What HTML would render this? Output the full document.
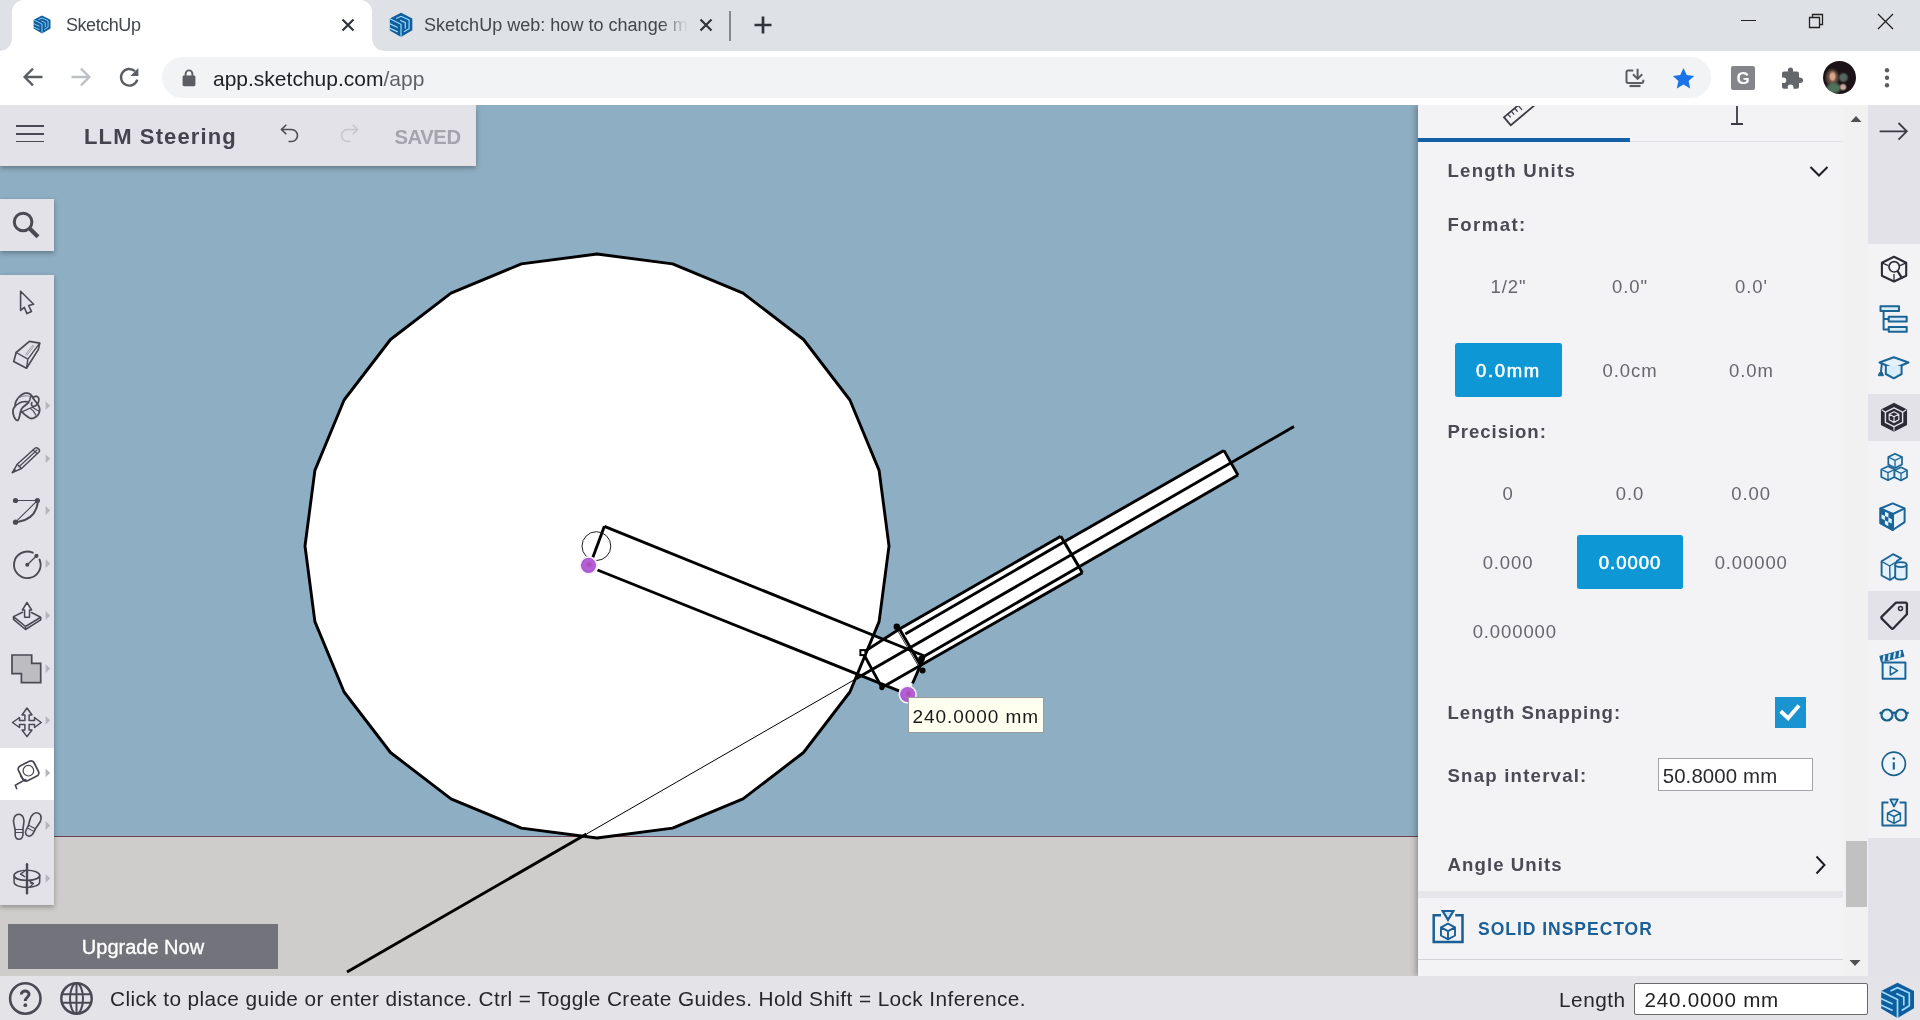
<!DOCTYPE html>
<html>
<head>
<meta charset="utf-8">
<title>SketchUp</title>
<style>
*{box-sizing:border-box;margin:0;padding:0}
html,body{width:1920px;height:1020px;overflow:hidden;background:#fff;font-family:"Liberation Sans",sans-serif;}
.abs{position:absolute}
#root{position:relative;width:1920px;height:1020px;overflow:hidden;will-change:transform}
/* ---------- browser chrome ---------- */
#tabstrip{left:0;top:0;width:1920px;height:51px;background:#dee1e6}
#tab1{left:12px;top:0;width:360px;height:51px;background:#fff;border-radius:12px 12px 0 0}
#tab1:before,#tab1:after{content:"";position:absolute;bottom:0;width:12px;height:12px;background:radial-gradient(circle at 0 0,transparent 11.5px,#fff 12px)}
#tab1:before{left:-12px}
#tab1:after{right:-12px;background:radial-gradient(circle at 100% 0,transparent 11.5px,#fff 12px)}
.tabtitle{font-size:18px;color:#43474b;white-space:nowrap;line-height:22px}
#toolbar{left:0;top:51px;width:1920px;height:54px;background:#fff}
#omni{left:161.5px;top:57px;width:1549px;height:41.4px;border-radius:20.7px;background:#f1f3f4}
#url{left:213px;top:66.5px;font-size:21px;line-height:24px;color:#202124;white-space:nowrap}
#url span{color:#5f6368}
/* ---------- app ---------- */
#app{left:0;top:105px;width:1920px;height:915px;background:#8eaec3;overflow:hidden}
#appin{left:0;top:1px;width:1920px;height:914px}
#ground{left:0;top:731px;width:1418px;height:140px;background:#cecdcb}
#horizon{left:0;top:730px;width:1418px;height:1.2px;background:#6e4050}
#canvas{left:0;top:0}
#hdr{left:0;top:0;width:476px;height:60px;background:#e3e2e8;box-shadow:0 -1px 0 #e3e2e8,0 2px 5px rgba(0,0,0,.32)}
#title{left:84px;top:17px;font-size:22px;font-weight:bold;color:#45444e;letter-spacing:1.13px;line-height:28px;white-space:nowrap}
#saved{left:394.5px;top:17px;font-size:20.3px;font-weight:bold;color:#a5a4ad;line-height:28px;letter-spacing:-.45px}
#search{left:0;top:93px;width:54px;height:52px;background:#e3e2e8;box-shadow:0 2px 5px rgba(0,0,0,.32)}
#tools{left:0;top:169px;width:54px;height:630px;background:#e3e2e8;box-shadow:0 2px 5px rgba(0,0,0,.32)}
#toolact{left:0;top:642px;width:54px;height:52px;background:#fff}
#upgrade{left:8px;top:818px;width:270px;height:44.6px;background:#73737b;color:#fff;font-size:20px;line-height:46.600px;text-align:center;-webkit-text-stroke:.35px #fff}
#status{left:0;top:870px;width:1920px;height:44px;background:#e3e3e8}
#statustxt{left:110px;top:10px;font-size:20.8px;line-height:26px;color:#27262c;white-space:nowrap;letter-spacing:.4px}
#lenlbl{left:1559px;top:11px;font-size:20.8px;line-height:26px;color:#27262c;letter-spacing:.5px}
#leninp{left:1634px;top:6.5px;width:234px;height:32.5px;background:#fff;border:1.5px solid #6a6a6a;border-radius:2px;font-size:20.6px;letter-spacing:.78px;line-height:32px;padding-left:9.5px;color:#222;white-space:nowrap}
/* ---------- right panel ---------- */
#panel{left:1418px;top:0;width:450px;height:870px;background:#f3f3f6;box-shadow:0 -1px 0 #f3f3f6,-2px 0 6px rgba(0,0,0,.3)}
#strip{left:1868px;top:0;width:52px;height:870px;background:#f3f3f6;box-shadow:0 -1px 0 #e3e2e8}
.hl{background:#e3e2e8;left:0;width:52px}
.pt{font-weight:bold;color:#4b4a54;font-size:18.6px;line-height:24px;white-space:nowrap}
.opt{font-size:18.5px;color:#67666f;line-height:24px;text-align:center;width:120px;white-space:nowrap}
.opt.w{color:#fff;-webkit-text-stroke:.55px #fff}
</style>
</head>
<body>
<div id="root">
<!-- CHROME -->
<div id="tabstrip" class="abs"></div>
<div id="tab1" class="abs"></div>
<div id="toolbar" class="abs"></div>
<div id="omni" class="abs"></div>
<!-- tab 1 -->
<svg class="abs" style="left:33px;top:15px" width="18" height="19" viewBox="10 10.500 35 37"><path d="M27.500 11.300 44 19.600V36.800L27.500 46.600 11.200 37V19.600z" fill="#0e5d9c"/><path d="M11.300 19.900 27.500 28V46.500M20.400 19.600 27.600 16.300 39.300 21.600V34.300L31.700 38.900M26.300 22l7.500 3.500V34M10.800 27l11.900 5.600M10.800 33.600l11.900 5.400" fill="none" stroke="#9bdcff" stroke-width="1.700"/></svg>
<div class="abs tabtitle" style="left:66px;top:14px;letter-spacing:-.45px">SketchUp</div>
<svg class="abs" style="left:341px;top:18px" width="14" height="14" viewBox="0 0 14 14"><path d="M1.5 1.5l11 11M12.5 1.5l-11 11" stroke="#30343a" stroke-width="2.2"/></svg>
<!-- tab 2 -->
<svg class="abs" style="left:389px;top:12px" width="24" height="26" viewBox="10 10.500 35 37"><path d="M27.500 11.300 44 19.600V36.800L27.500 46.600 11.200 37V19.600z" fill="#0e5d9c"/><path d="M11.300 19.900 27.500 28V46.500M20.400 19.600 27.600 16.300 39.300 21.600V34.300L31.700 38.900M26.300 22l7.500 3.500V34M10.800 27l11.900 5.600M10.800 33.600l11.900 5.400" fill="none" stroke="#9bdcff" stroke-width="1.700"/></svg>
<div class="abs tabtitle" id="t2" style="left:424px;top:14px;width:266px;overflow:hidden;letter-spacing:0.02px;-webkit-mask-image:linear-gradient(90deg,#000 236px,transparent 264px)">SketchUp web: how to change measure</div>
<svg class="abs" style="left:699px;top:18px" width="14" height="14" viewBox="0 0 14 14"><path d="M1.5 1.5l11 11M12.5 1.5l-11 11" stroke="#30343a" stroke-width="2.2"/></svg>
<div class="abs" style="left:729px;top:11px;width:1.6px;height:30px;background:#85888d"></div>
<svg class="abs" style="left:753px;top:15px" width="20" height="20" viewBox="0 0 20 20"><path d="M10 1.5v17M1.5 10h17" stroke="#30343a" stroke-width="2.7"/></svg>
<!-- window controls -->
<div class="abs" style="left:1741px;top:20px;width:15px;height:1.2px;background:#222"></div>
<svg class="abs" style="left:1808px;top:13px" width="17" height="17" viewBox="0 0 17 17"><path d="M1.5 4.5h10v10h-10zM4.5 4.5v-3h10v10h-3" fill="none" stroke="#222" stroke-width="1.3"/></svg>
<svg class="abs" style="left:1877px;top:13px" width="17" height="17" viewBox="0 0 17 17"><path d="M1 1l15 15M16 1L1 16" stroke="#222" stroke-width="1.3"/></svg>
<!-- nav -->
<svg class="abs" style="left:22px;top:66px" width="22" height="22" viewBox="0 0 22 22"><path d="M20.5 11H3M11 2.6 2.6 11l8.4 8.4" fill="none" stroke="#5a5e63" stroke-width="2.3"/></svg>
<svg class="abs" style="left:70px;top:66px" width="22" height="22" viewBox="0 0 22 22"><path d="M1.5 11H19M11 2.6l8.4 8.4-8.4 8.4" fill="none" stroke="#bcc0c5" stroke-width="2.3"/></svg>
<svg class="abs" style="left:118px;top:66px" width="23" height="23" viewBox="0 0 23 23"><path d="M19.3 13.6A8.3 8.3 0 1 1 17 5.2" fill="none" stroke="#5a5e63" stroke-width="2.4"/><path d="M20.4 2v8h-8z" fill="#5a5e63"/></svg>
<svg class="abs" style="left:182px;top:69px" width="14" height="18" viewBox="0 0 14 18"><path d="M3.6 7V4.8a3.4 3.4 0 0 1 6.8 0V7" fill="none" stroke="#5a5e63" stroke-width="1.9"/><rect x="0.6" y="6.6" width="12.8" height="10.6" rx="1.4" fill="#5a5e63"/></svg>
<div class="abs" id="url">app.sketchup.com<span>/app</span></div>
<!-- right icons -->
<svg class="abs" style="left:1623px;top:66px" width="24" height="24" viewBox="1623 66 24 24" fill="none" stroke="#5a5e63" stroke-width="2"><path d="M1633.300 70.500H1628.200Q1626.500 70.500 1626.500 72.200V81.300Q1626.500 83 1628.200 83H1641.600Q1643.300 83 1643.300 81.300V79.800"/><path d="M1629.500 86H1640.500" stroke-width="2.200"/><path d="M1637.600 68.800V78.300M1633 74.300 1637.600 78.900 1642.200 74.300" stroke-width="2"/></svg>
<svg class="abs" style="left:1671.500px;top:66.500px" width="23" height="22" viewBox="0 0 25 24"><path d="M12.5 1.2l3.5 7.6 8.1.9-6 5.6 1.7 8.1-7.3-4.2-7.3 4.2 1.7-8.1-6-5.6 8.1-.9z" fill="#1a73e8"/></svg>
<div class="abs" style="left:1731px;top:66px;width:24px;height:24px;background:#838588;border-radius:2px;color:#fff;font-size:17px;font-weight:bold;line-height:25px;text-align:center">G</div>
<svg class="abs" style="left:1779px;top:66px" width="24" height="24" viewBox="0 0 24 24"><path d="M21.5 11.5H20V7.6c0-1.1-.9-2-2-2h-3.9V4.1a2.6 2.6 0 0 0-5.2 0v1.5H5c-1.1 0-2 .9-2 2v3.8h1.5a2.8 2.8 0 0 1 0 5.6H3v3.8c0 1.1.9 2 2 2h3.8v-1.5a2.8 2.8 0 0 1 5.6 0v1.5H18c1.100 0 2-.9 2-2v-3.900h1.500a2.600 2.600 0 0 0 0-5.200z" fill="#63666b"/></svg>
<div class="abs" style="left:1823px;top:61px;width:33px;height:33px;border-radius:50%;background:radial-gradient(ellipse 3.5px 5px at 29% 47%,#d9a58c 0 60%,rgba(160,110,90,.6) 100%,transparent 130%),radial-gradient(ellipse 4px 4px at 61% 79%,#caa79c 0 50%,transparent 100%),radial-gradient(ellipse 5px 5px at 62% 50%,#56655f 0 60%,transparent 110%),radial-gradient(ellipse 8px 6px at 33% 82%,#4f7058 0 60%,transparent 110%),radial-gradient(ellipse 7px 9px at 28% 50%,#5a4a3c 0 70%,transparent 110%),#1b1317;"></div>
<svg class="abs" style="left:1883px;top:66px" width="8" height="24" viewBox="0 0 8 24"><circle cx="4" cy="4.200" r="2.200" fill="#5a5e63"/><circle cx="4" cy="11.700" r="2.200" fill="#5a5e63"/><circle cx="4" cy="19.200" r="2.200" fill="#5a5e63"/></svg>

<!-- APP -->
<div id="app" class="abs"><div id="appin" class="abs">
<div id="ground" class="abs"></div>
<div id="horizon" class="abs"></div>
<svg id="canvas" class="abs" width="1418" height="869" viewBox="0 0 1418 869" style="left:0;top:0">
<g fill="#fff" stroke="#000" stroke-width="2.9" stroke-linejoin="round" stroke-linecap="butt">
<polygon points="889.0,440.0 879.1,364.4 849.9,294.0 803.5,233.5 743.0,187.1 672.6,157.9 597.0,148.0 521.4,157.9 451.0,187.1 390.5,233.5 344.1,294.0 314.9,364.4 305.0,440.0 314.9,515.6 344.1,586.0 390.5,646.5 451.0,692.9 521.4,722.1 597.0,732.0 672.6,722.1 743.0,692.9 803.5,646.5 849.9,586.0 879.1,515.6" stroke="none"/>
<polygon points="589.5,460.5 604.4,420.3 924.5,550.0 908.0,588.0" stroke="none"/>
<polygon points="862.9,546.6 899.5,523.0 1060.8,430.3 1082.4,466.7 881.9,581.6" stroke="none"/>
<polygon points="1065.5,435.0 1223.9,344.4 1238.0,369.1 1080.4,460.1" stroke="none"/>
<polygon points="889.0,440.0 879.1,364.4 849.9,294.0 803.5,233.5 743.0,187.1 672.6,157.9 597.0,148.0 521.4,157.9 451.0,187.1 390.5,233.5 344.1,294.0 314.9,364.4 305.0,440.0 314.9,515.6 344.1,586.0 390.5,646.5 451.0,692.9 521.4,722.1 597.0,732.0 672.6,722.1 743.0,692.9 803.5,646.5 849.9,586.0 879.1,515.6" fill="none"/>
<line x1="592.8" y1="451.5" x2="604.4" y2="420.3"/>
<line x1="604.4" y1="420.3" x2="924.5" y2="550.0"/>
<line x1="597.5" y1="464.0" x2="899.0" y2="584.8"/>
<line x1="924.5" y1="550.0" x2="912.5" y2="577.5"/>
<line x1="899.5" y1="523.0" x2="1060.8" y2="430.3"/>
<line x1="1060.8" y1="430.3" x2="1082.4" y2="466.7"/>
<line x1="1082.4" y1="466.7" x2="881.9" y2="581.6"/>
<line x1="899.5" y1="523.0" x2="920.7" y2="559.5"/>
<line x1="862.9" y1="546.6" x2="899.5" y2="523.0"/>
<line x1="862.9" y1="546.6" x2="881.9" y2="581.6"/>
<line x1="905.3" y1="528.1" x2="1065.5" y2="435.0"/>
<line x1="924.7" y1="549.9" x2="1080.4" y2="460.1"/>
<line x1="1065.5" y1="435.0" x2="1223.9" y2="344.4"/>
<line x1="1223.9" y1="344.4" x2="1238.0" y2="369.1"/>
<line x1="1238.0" y1="369.1" x2="1080.4" y2="460.1"/>
<line x1="856.0" y1="572.8" x2="1294.0" y2="320.5"/>
<line x1="347.0" y1="866.0" x2="586.5" y2="728.0"/>
<line x1="586.5" y1="728.0" x2="856.0" y2="572.8" stroke-width="1"/>
<line x1="897.2" y1="523.8" x2="918.6" y2="560.3" stroke-width="0.8"/>
</g>
<g fill="#000">
<circle cx="896.8" cy="520.8" r="3.2"/>
<circle cx="921.4" cy="553.0" r="3.2"/>
<circle cx="922.6" cy="564.4" r="3.0"/>
<circle cx="881.9" cy="581.6" r="2.6"/>
</g>
<rect x="860.4" y="544.1" width="5" height="5" fill="#fff" stroke="#000" stroke-width="2"/>
<circle cx="596.4" cy="440.1" r="14.4" fill="none" stroke="#222" stroke-width="1"/>
<defs><radialGradient id="pg" cx="55%" cy="45%" r="60%"><stop offset="0" stop-color="#a846b4"/><stop offset=".45" stop-color="#b560d8"/><stop offset="1" stop-color="#a858cc"/></radialGradient></defs>
<circle cx="588.5" cy="459.29999999999995" r="9.2" fill="#f7effc"/>
<circle cx="588.5" cy="459.29999999999995" r="7.6" fill="url(#pg)"/>
<circle cx="907.7" cy="588.5" r="9.2" fill="#f7effc"/>
<circle cx="907.7" cy="588.5" r="7.6" fill="url(#pg)"/>
</svg>
<div class="abs" style="left:908px;top:591px;width:136px;height:36px;background:#fffff0;border:1px solid #9a9a9a;font-size:19px;line-height:37px;padding-left:3.5px;letter-spacing:.93px;color:#1a1a1a;white-space:nowrap">240.0000 mm</div>
<div id="hdr" class="abs"><div class="abs" style="left:16px;top:19px;width:28px;height:1.7px;background:#4b4a54"></div>
<div class="abs" style="left:16px;top:27px;width:28px;height:1.7px;background:#4b4a54"></div>
<div class="abs" style="left:16px;top:34.500px;width:28px;height:1.700px;background:#4b4a54"></div>
<div class="abs" id="title">LLM Steering</div>
<svg class="abs" style="left:279px;top:17px" width="22" height="22" viewBox="0 0 22 22"><path d="M2.500 6.500H12.500A6 6 0 0 1 12.500 18.500H9.500" fill="none" stroke="#4b4a54" stroke-width="1.600"/><path d="M7.300 1.800 2.500 6.500 7.300 11.200" fill="none" stroke="#4b4a54" stroke-width="1.600"/></svg>
<svg class="abs" style="left:338px;top:17px" width="22" height="22" viewBox="0 0 22 22"><path d="M19.500 6.500H9.500A6 6 0 0 0 9.500 18.500H12.500" fill="none" stroke="#c6c5cd" stroke-width="1.600"/><path d="M14.700 1.800 19.500 6.500 14.700 11.200" fill="none" stroke="#c6c5cd" stroke-width="1.600"/></svg>
<div class="abs" id="saved">SAVED</div>
</div>
<div id="search" class="abs"><svg class="abs" style="left:10px;top:10px" width="32" height="32" viewBox="0 0 32 32"><circle cx="13.100" cy="13" r="8.800" fill="none" stroke="#4b4a54" stroke-width="3"/><path d="M19.600 19.600 28 27.700" stroke="#4b4a54" stroke-width="4.200" stroke-linecap="butt"/></svg>
</div>
<div id="tools" class="abs"><div id="toolact" class="abs" style="top:473px"></div><svg class="abs" style="left:0;top:0" width="54" height="630" viewBox="0 275 54 630" fill="none" stroke="#4b4a54" stroke-width="1.7" stroke-linejoin="round" stroke-linecap="round">
<!-- select -->
<path d="M20.600 291.300V310.400L24.300 307.300 26.900 313.600 31.500 311.600 28.700 305.500 33.600 304.200Z" stroke-width="1.600"/>
<!-- eraser -->
<path d="M29.400 341.300 39.700 343.200 38.300 349.600 26.500 368.200 13.700 361.400 16.200 352.500Z"/>
<path d="M16.200 352.500 27.900 359.200 39.700 343.200M27.900 359.200 26.500 368.200" stroke-width="1.400"/>
<path d="M25.600 354.500 32.800 345.300M27 355.300 34 346" stroke-width=".8" stroke="#8a8992"/>
<!-- paint bucket -->
<path d="M31.5 395.4 29.8 393.8 27.6 393.1 25 393.2 22.5 394.2 20 396 17.8 398.5 16.3 400.8 15.4 402.9 15 406.4 13.6 408.3 13 410.5 13.1 413.5 13.9 416.3 15 418.5 16.2 420 17.4 420.5 18.4 419.8 18.9 418.5 19.6 416 20.1 413.5 20.8 411 21.7 408.7 22.9 407.2 24.4 406 26.5 404.3 28.7 402.5" stroke-width="1.800"/>
<path d="M15.8 405.6 17.2 404.3 18.9 403.3 21 402.3 23.3 401.7 25.7 401.6 28 401.7 29.5 400.9 30 399.5 30.3 397.8 30.8 396.5 31.5 395.4" stroke-width="1.500"/>
<path d="M17.8 398.9 19.6 397.6 21.7 396.6 24 396 26.4 395.8 28.3 396 29.9 396.6" stroke-width=".900" stroke="#77767f"/>
<path d="M21.7 411.9 24.8 414.6 28 417 29.6 418 31.1 418.5 33.1 418.3 35 417.4 37 416 38.5 414.2 39.4 412 39.7 409.5 39.3 407.4 38.5 405.6 37 403.3 35.2 401 33.5 398.9 31.9 396.2" stroke-width="1.800"/>
<path d="M21.7 411.9 26.4 409.9 30.3 408 33.5 407.2M30.3 408.4 33.5 411.1 35.8 415M33.5 408 38.5 411.1" stroke-width="1.200"/>
<path d="M33.5 397.4 34.6 396.5 35.8 396.2 37.1 396.5 38.2 397.4 38.8 398.7 38.9 400.1 38.5 401.8 37.8 403.3 36.9 404.6 35.8 405.6 34.7 406.2 33.5 406.4 32.3 406 31.5 405.2 31.5 403.8 31.9 402.5" stroke-width="1.700"/>
<!-- pencil -->
<path d="M12.300 472.600 17.200 464.300 35 448.200C36.800 446.600 40.600 449.700 39.200 451.700L21.500 468.500Z" stroke-width="1.500"/>
<path d="M19 466.800 37 450M17.200 464.300 21.500 468.500M33 450 37.300 453.700" stroke-width="1.200"/>
<path d="M12.300 472.600 14.500 468.800 16 470.500Z" fill="#4b4a54" stroke-width=".8"/>
<!-- arc -->
<path d="M15.500 500.500H37.400M15.500 522.200 37.400 500.500" stroke-width="1.100"/>
<path d="M18.500 521.800Q35 519 37.600 503.500" stroke-width="2"/>
<g fill="#4b4a54" stroke="none"><circle cx="15.500" cy="500.500" r="2.600"/><circle cx="37.400" cy="500.500" r="2.600"/><circle cx="15.500" cy="522.200" r="2.600"/></g>
<!-- circle -->
<path d="M39.500 559.500A13.300 13.300 0 1 1 32.800 552.700" stroke-width="1.900"/>
<path d="M27.300 564.700 36.300 556" stroke-width="1.300"/>
<g fill="#4b4a54" stroke="none"><circle cx="27.300" cy="564.700" r="2"/><circle cx="36.400" cy="555.900" r="2.100"/></g>
<!-- push pull -->
<path d="M22.500 612.300 13.500 616.600 25.500 626.500 40.700 617.200 31.500 612.500M13.500 616.600V619.300L25.500 629.500 40.700 619.800V617.200M25.500 626.500V629.500" stroke-width="1.600"/>
<path d="M27 602.500 22.400 610H24.600V617.200H29.500V610H31.600Z" fill="#ebeaef" stroke-width="1.500"/>
<!-- shells -->
<path d="M12 655H31.700V663.300H40.700V682.700H21.400V673.700H12Z" fill="#bdbcc1" stroke-width="1.700" stroke-linejoin="miter"/>
<!-- move -->
<path d="M27 708 22 715H24.900V720.400H19.500V717.500L12.500 722.500 19.500 727.500V724.600H24.900V730H22L27 736.600 32 730H29.100V724.600H34.500V727.500L41.200 722.500 34.500 717.500V720.400H29.100V715H32Z" stroke-width="1.500"/>
<!-- tape -->
<g transform="rotate(-27 28.500 771)"><rect x="19.800" y="762.700" width="17.400" height="16.600" rx="3.500" stroke-width="1.800"/></g>
<circle cx="28.400" cy="770.700" r="5.300" stroke-width="1.200"/>
<path d="M25.500 779.500 15.300 785.200 16.700 788.600" stroke-width="1.600"/>
<path d="M20.500 775.500C21.500 778 23.500 779.800 26.500 780.500" stroke-width="1.500"/>
<!-- walk -->
<path d="M18.800 814.300C23 814.300 24.800 819.500 23.600 824.500C22.800 828 22.800 830 23 833.500C23.200 837.500 21 839.300 18.800 839.300C16.500 839.300 14.800 837 15.200 833.500C15.600 830 15 828 14 824.500C12.500 819.500 14.500 814.300 18.800 814.300Z" stroke-width="1.600"/>
<path d="M15.300 829.500H22.800M15.300 832.500H22.800" stroke-width="1"/>
<g transform="rotate(27 33 824.500)"><path d="M33 812C37.200 812 39 817.200 37.800 822.200C37 825.700 37 827.700 37.200 831.200C37.400 835.200 35.200 837 33 837C30.700 837 29 834.700 29.400 831.200C29.800 827.700 29.200 825.700 28.200 822.200C26.700 817.200 28.700 812 33 812Z" stroke-width="1.600"/><path d="M29.500 827.200H37M29.500 830.200H37" stroke-width="1"/></g>
<!-- orbit -->
<ellipse cx="26.900" cy="875.300" rx="12.800" ry="5.100" stroke-width="1.500"/>
<path d="M14.100 875.300V882.300C14.100 885.100 19.900 887.400 26.900 887.400C33.900 887.400 39.700 885.100 39.700 882.300V875.300" stroke-width="1.500"/>
<path d="M27 864.300V893.300" stroke-width="2.400"/>
<path d="M24.800 871 20.500 874.100 24.800 876.800M20.500 874.100 23.500 875.500M29.100 880.800 33.500 883.500 29.900 887M33.500 883.500 30.500 883.200" stroke-width="1.300"/>
<path d="M14.100 877.500C17 879.500 22 880.400 25.500 880.300M28.500 880.300C33 880.200 37.500 879 39.700 877.200" stroke-width="1.100"/>
<!-- submenu triangles -->
<g fill="#b6b5bc" stroke="none">
<path d="M45.600 401.300 50.200 405.700 45.600 410.100Z"/><path d="M45.600 454.300 50.200 458.700 45.600 463.100Z"/><path d="M45.600 506.100 50.200 510.500 45.600 514.900Z"/><path d="M45.600 559.300 50.200 563.700 45.600 568.100Z"/><path d="M45.600 611.100 50.200 615.500 45.600 619.900Z"/><path d="M45.600 664.200 50.200 668.600 45.600 673Z"/><path d="M45.600 715.900 50.200 720.300 45.600 724.700Z"/><path d="M45.600 768.500 50.200 772.900 45.600 777.300Z"/><path d="M45.600 821.100 50.200 825.500 45.600 829.900Z"/><path d="M45.600 874 50.200 878.400 45.600 882.800Z"/>
</g>
</svg>
</div>
<div id="upgrade" class="abs">Upgrade Now</div>
<div id="panel" class="abs"><div class="abs" style="left:0.0px;top:31.6px;width:212px;height:4.2px;background:#1260a5"></div>
<div class="abs" style="left:212.0px;top:34.6px;width:213px;height:1.2px;background:#e2e2e6"></div>
<svg class="abs" style="left:82px;top:0" width="44" height="26" viewBox="1500 106 44 26" fill="none" stroke="#3c3b45" stroke-width="1.8"><g transform="translate(0 -3.500) rotate(-40 1521 113)"><rect x="1503" y="108" width="36" height="10.5"/><path d="M1508 108v4.5M1512.500 108v4.500M1517 108v4.500M1521.500 108v6" stroke-width="1.200"/></g></svg>
<svg class="abs" style="left:309px;top:0" width="20" height="22" viewBox="1727 106 20 22" fill="none" stroke="#3c3b45" stroke-width="1.800"><path d="M1737 105V124M1731 124H1743"/></svg>
<div class="abs" style="left:425.5px;top:0.0px;width:24.5px;height:870px;background:#f1f1f1"></div>
<div class="abs" style="left:427.5px;top:735.0px;width:21px;height:65.5px;background:#c1c1c1"></div>
<svg class="abs" style="left:431.5px;top:9px" width="12" height="8" viewBox="0 0 12 8"><path d="M0.500 7 6 1 11.500 7Z" fill="#505050"/></svg>
<svg class="abs" style="left:431px;top:853px" width="12" height="8" viewBox="0 0 12 8"><path d="M0.500 1 6 7 11.500 1Z" fill="#505050"/></svg>
<div class="abs pt" style="left:29.5px;top:53.4px;letter-spacing:1.24px;">Length Units</div>
<svg class="abs" style="left:391px;top:59px" width="20" height="13" viewBox="0 0 20 13"><path d="M1.500 2 10 10.500 18.500 2" fill="none" stroke="#1d1c24" stroke-width="2"/></svg>
<div class="abs pt" style="left:29.5px;top:106.8px;letter-spacing:1.43px;">Format:</div>
<div class="abs opt" style="left:30.0px;top:168.8px;letter-spacing:0.9px;text-indent:0.9px">1/2"</div>
<div class="abs opt" style="left:151.6px;top:168.8px;letter-spacing:0.9px;text-indent:0.9px">0.0"</div>
<div class="abs opt" style="left:273.0px;top:168.8px;letter-spacing:0.9px;text-indent:0.9px">0.0'</div>
<div class="abs" style="left:37.0px;top:237.0px;width:107px;height:53.6px;background:#0e97d5;border-radius:2.5px"></div>
<div class="abs opt w" style="left:29.6px;top:253.3px;letter-spacing:1.6px;text-indent:1.6px">0.0mm</div>
<div class="abs opt" style="left:151.6px;top:253.3px;letter-spacing:0.9px;text-indent:0.9px">0.0cm</div>
<div class="abs opt" style="left:273.0px;top:253.3px;letter-spacing:0.9px;text-indent:0.9px">0.0m</div>
<div class="abs pt" style="left:29.5px;top:313.5px;letter-spacing:0.94px;">Precision:</div>
<div class="abs opt" style="left:29.6px;top:376.3px;letter-spacing:0.9px;text-indent:0.9px">0</div>
<div class="abs opt" style="left:151.6px;top:376.3px;letter-spacing:0.9px;text-indent:0.9px">0.0</div>
<div class="abs opt" style="left:272.6px;top:376.3px;letter-spacing:0.9px;text-indent:0.9px">0.00</div>
<div class="abs" style="left:158.6px;top:428.8px;width:106.4px;height:53.9px;background:#0e97d5;border-radius:2.5px"></div>
<div class="abs opt" style="left:29.6px;top:445.3px;letter-spacing:0.9px;text-indent:0.9px">0.000</div>
<div class="abs opt w" style="left:151.6px;top:445.3px;letter-spacing:0.98px;text-indent:0.98px">0.0000</div>
<div class="abs opt" style="left:272.8px;top:445.3px;letter-spacing:0.9px;text-indent:0.9px">0.00000</div>
<div class="abs opt" style="left:36.4px;top:514.3px;letter-spacing:0.9px;text-indent:0.9px">0.000000</div>
<div class="abs pt" style="left:29.5px;top:594.5px;letter-spacing:0.97px;">Length Snapping:</div>
<div class="abs" style="left:357.0px;top:590.6px;width:31.3px;height:31.5px;background:#1a93d1"></div>
<svg class="abs" style="left:356px;top:590px" width="33" height="33" viewBox="1774 696 33 33"><path d="M1780.700 711.300 1788.100 718.200 1799 705.500" fill="none" stroke="#fff" stroke-width="3.900"/></svg>
<div class="abs pt" style="left:29.5px;top:657.9px;letter-spacing:1.22px;">Snap interval:</div>
<div class="abs" style="left:239.7px;top:652.4px;width:155px;height:32.4px;background:#fff;border:1px solid #a3a3a8;font-size:20.4px;letter-spacing:.12px;line-height:34px;padding-left:4px;color:#2a2a2e;white-space:nowrap">50.8000 mm</div>
<div class="abs pt" style="left:29.5px;top:746.7px;letter-spacing:1.08px;">Angle Units</div>
<svg class="abs" style="left:396px;top:749px" width="13" height="20" viewBox="0 0 13 20"><path d="M2.500 1.500 10.500 10 2.500 18.500" fill="none" stroke="#1d1c24" stroke-width="2"/></svg>
<div class="abs" style="left:0.0px;top:784.8px;width:425px;height:7.5px;background:#e6e6ea"></div>
<svg class="abs" style="left:13px;top:802px" width="35" height="37" viewBox="1431 908 35 37" fill="none" stroke="#1a5f96" stroke-width="2.500"><path d="M1441 915.200H1433.700V942H1462.500V915.200H1455.200"/><path d="M1442.700 911H1453.400L1448 919.800Z" stroke-width="2.200" fill="#cfe6f7"/><path d="M1448 923.600 1455 927.300V935.500L1448 939.300 1441 935.500V927.300ZM1441 927.300 1448 931.200 1455 927.300M1448 931.200V939.300" stroke-width="1.900"/></svg>
<div class="abs" style="left:60px;top:811.1px;font-weight:bold;font-size:17.5px;letter-spacing:.98px;line-height:24px;color:#1a5f96;white-space:nowrap">SOLID INSPECTOR</div>
<div class="abs" style="left:0.0px;top:852.8px;width:425px;height:1.2px;background:#d2d2d7"></div></div>
<div id="strip" class="abs"><div class="abs hl" style="top:0;height:138px"></div>
<div class="abs hl" style="top:287.500px;height:47.500px"></div>
<div class="abs hl" style="top:485px;height:48.600px"></div>
<div class="abs hl" style="top:732px;height:138px"></div>
<svg class="abs" style="left:0;top:0" width="52" height="869" viewBox="1868 106 52 869" fill="none" stroke-linejoin="round">
<!-- arrow -->
<path d="M1879.600 131.300H1906.500M1898.500 123 1906.800 131.300 1898.500 139.600" stroke="#3c3b45" stroke-width="1.800" stroke-linejoin="miter"/>
<!-- entity info -->
<g stroke="#2d2c36" stroke-width="2.100">
<path d="M1894 256.800 1906.200 262.800V275.700L1894 281.500 1881.900 275.700V262.800Z"/>
<path d="M1881.900 262.800 1888.300 265.600M1906.200 262.800 1900 265.600M1894 281.500V274" stroke-width="1.300"/>
<circle cx="1894.200" cy="266.800" r="5.200" stroke-width="1.700"/><path d="M1897.600 271 1902.300 278.600" stroke-width="2.300"/>
</g>
<!-- outliner -->
<g stroke="#1a6496" stroke-width="2" fill="#d8ecfa">
<rect x="1880.500" y="306.300" width="18.500" height="4.700"/><rect x="1888.700" y="316.700" width="18" height="4.700"/><rect x="1888.700" y="327" width="18" height="4.700"/>
<path d="M1883.600 311V329.400H1888.700M1883.600 319H1888.700" fill="none"/>
</g>
<!-- instructor -->
<g stroke="#1a6496" stroke-width="2">
<path d="M1879.500 362.500 1893.800 357.200 1908.500 362.500 1893.800 368.500Z" fill="#e4f1fb"/>
<path d="M1885.800 366V374L1893.800 378.300 1901.600 374V366" fill="#d8ecfa"/>
<path d="M1881.800 363.800 1880.800 373.500" /><path d="M1878.300 375.700 1879.500 372.500H1882.300L1883.500 375.700Z" fill="#1a6496" stroke-width="1"/>
</g>
<!-- components (dark, highlighted) -->
<g>
<path d="M1894 403.600 1906.300 409.800V424.600L1894 430.800 1881.700 424.600V409.800Z" fill="#2d2c36" stroke="#2d2c36" stroke-width="1.500"/>
<path d="M1894 407.800 1902.600 412.200V422.400L1894 426.700 1885.400 422.400V412.200Z" stroke="#e3e2e8" stroke-width="1.400"/>
<path d="M1894 411.800 1898.800 414.300V419.800L1894 422.400 1889.200 419.800V414.300ZM1889.200 414.300 1894 416.800 1898.800 414.300M1894 416.800V422.400" stroke="#e3e2e8" stroke-width="1.200"/>
<path d="M1881.700 409.800 1885.400 412.200M1906.300 409.800 1902.600 412.200M1894 430.800V426.700" stroke="#e3e2e8" stroke-width="1.100"/>
</g>
<!-- 3 cubes -->
<g stroke="#1a6496" stroke-width="1.700" fill="#e4f1fb">
<path d="M1888 466.300 1894.500 469.500V477L1888 480.200 1881.300 477V469.500Z"/><path d="M1881.300 469.500 1888 472.700 1894.500 469.500M1888 472.700V480.200" stroke-width="1.300"/>
<path d="M1901 467.300 1907 470.200V477.200L1901 480.400 1894.500 477.200V470.200Z"/><path d="M1894.500 470.200 1901 473.400 1907 470.200M1901 473.400V480.400" stroke-width="1.300"/>
<path d="M1895 453.700 1902 457V464.500L1895 468 1888.300 464.500V457Z"/><path d="M1888.300 457 1895 460.300 1902 457M1895 460.300V468" stroke-width="1.300"/>
</g>
<!-- materials cube -->
<g stroke="#1a6496" stroke-width="2">
<path d="M1892.700 503.400 1904.600 508.400V522.100L1892.700 530 1880.500 523.200V508.500Z" fill="#e9f3fb"/>
<path d="M1880.500 508.500 1893 514V530L1880.500 523.200Z" fill="#1a6496"/>
<path d="M1893 514 1904.600 508.400" />
<path d="M1885.0 511.8 1888.5 513.3 1888.4 517.6 1885.0 516.0ZM1881.5 514.4 1885.0 516.0 1884.9 520.2 1881.5 518.4ZM1888.4 517.6 1891.8 519.3 1891.7 523.6 1888.3 521.9ZM1884.9 520.2 1888.3 521.9 1888.3 526.2 1884.9 524.3Z" fill="#dff1fc" stroke="none"/>
</g>
<!-- styles: box + cylinder -->
<g stroke="#1a6496" stroke-width="1.900" fill="#e4f1fb">
<path d="M1893 554.200 1901.300 558.300 1897 561V575.500L1890 580 1881.600 575.500V561.300Z"/>
<path d="M1881.600 561.300 1889.700 566 1897.500 561M1889.700 566 1890 580" stroke-width="1.400"/>
<path d="M1895.200 564.600V577C1895.200 580.300 1906.600 580.300 1906.600 577V564.600"/><ellipse cx="1900.900" cy="564.600" rx="5.700" ry="2.500"/>
</g>
<!-- tags -->
<g stroke="#2d2c36" stroke-width="2.300">
<path d="M1895.800 602.700H1905.500Q1906.900 602.700 1906.900 604.100V614.300L1893.400 628.200Q1892.400 629.200 1891.400 628.200L1881.800 618.600Q1880.800 617.600 1881.800 616.600Z"/>
<circle cx="1900.500" cy="608.600" r="2" stroke-width="1.500"/>
</g>
<!-- scenes -->
<g stroke="#1a6496" stroke-width="2">
<rect x="1882.600" y="662.500" width="22.800" height="16.200" fill="#e9f3fb"/>
<path d="M1890.300 666.300V675L1897.500 670.600Z" stroke-width="1.500"/>
<g transform="rotate(-15 1881.500 662) translate(0.5 1.700)"><rect x="1881" y="654.500" width="23" height="5.800" fill="#1a6496" stroke-width="1.200"/><path d="M1885.500 654.500 1883 660.300M1891 654.500 1888.500 660.300M1896.500 654.500 1894 660.300M1902 654.500 1899.500 660.300" stroke="#d8ecfa" stroke-width="2"/></g>
</g>
<!-- glasses -->
<g stroke="#1a5f8a" stroke-width="2.200" fill="#e4f1fb">
<circle cx="1887" cy="715" r="5.500"/><circle cx="1901" cy="715" r="5.500"/>
<path d="M1892.300 713.300Q1894 712 1895.700 713.300M1881.600 713.500 1879.600 712.600M1906.400 713.500 1908.600 712.600" fill="none"/>
</g>
<!-- info -->
<g stroke="#1a5f8a">
<circle cx="1893.800" cy="763.700" r="11.600" stroke-width="1.700" fill="#eef5fb"/>
<path d="M1893.800 762.300V769.600" stroke-width="2.100"/><circle cx="1893.800" cy="758.500" r="1.300" fill="#1a5f8a" stroke="none"/>
</g>
<!-- solid inspector -->
<g stroke="#1a6496" stroke-width="2">
<path d="M1888.400 802.500H1882.400V825.400H1905.600V802.500H1899.600"/>
<path d="M1890.200 799.300H1897.900L1894 806.500Z" fill="#bfe0f6" stroke-width="1.700"/>
<path d="M1894 810 1900.400 813.200V820L1894 823.400 1887.500 820V813.200ZM1887.500 813.200 1894 816.500 1900.400 813.200M1894 816.500V823.400" stroke-width="1.500" fill="#e9f3fb"/>
</g>
</svg>
</div>
<div id="status" class="abs"><svg class="abs" style="left:7px;top:4px" width="36" height="36" viewBox="0 0 36 36"><circle cx="18.300" cy="18.500" r="15.200" fill="none" stroke="#4b4a54" stroke-width="2.600"/><path d="M14.300 14.500C14.300 9.900 22 10 22 14.300C22 17.300 18.300 17.300 18.300 21" fill="none" stroke="#4b4a54" stroke-width="3"/><circle cx="18.300" cy="25.200" r="1.900" fill="#4b4a54"/></svg>
<svg class="abs" style="left:58px;top:4px" width="36" height="36" viewBox="0 0 36 36" fill="none" stroke="#4b4a54" stroke-width="2"><circle cx="18.500" cy="18.500" r="15.200" stroke-width="2.500"/><ellipse cx="18.500" cy="18.500" rx="6.500" ry="15.200"/><path d="M18.500 3.300V33.700M4.200 14.200H32.800M4.200 22.800H32.800"/></svg>
<div class="abs" id="statustxt">Click to place guide or enter distance. Ctrl = Toggle Create Guides. Hold Shift = Lock Inference.</div>
<div class="abs" id="lenlbl">Length</div>
<div class="abs" id="leninp">240.0000 mm</div>
<svg class="abs" style="left:1880px;top:6px" width="35" height="37" viewBox="10 10.500 35 37"><path d="M27.500 11.300 44 19.600V36.800L27.500 46.600 11.200 37V19.600z" fill="#0e5d9c"/><path d="M11.300 19.900 27.500 28V46.500M20.400 19.600 27.600 16.300 39.300 21.600V34.300L31.700 38.900M26.300 22l7.500 3.500V34M10.800 27l11.900 5.600M10.800 33.600l11.900 5.400" fill="none" stroke="#9bdcff" stroke-width="1.700"/></svg>
</div>
</div></div>
</div>
</body>
</html>
